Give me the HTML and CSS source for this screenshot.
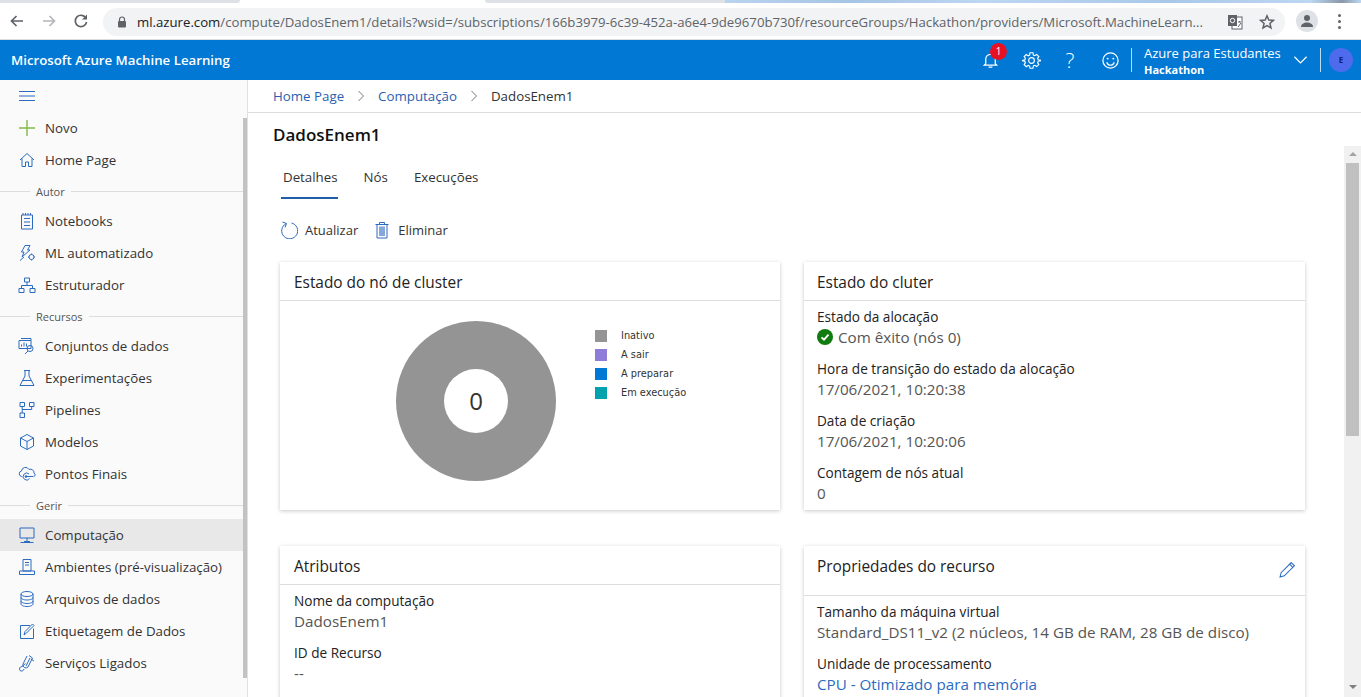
FILE: index.html
```html
<!DOCTYPE html>
<html lang="pt">
<head>
  <meta charset="UTF-8">
  <title>DadosEnem1 - Microsoft Azure Machine Learning</title>
  <link rel="stylesheet" href="styles.css">
</head>
<body>
  <!-- browser chrome -->
  <div class="tabstrip">
    <div class="strip-tab strip-a"></div>
    <div class="strip-tab strip-b"></div>
    <div class="wallpaper"></div>
  </div>
  <div class="toolbar">
    <div class="nav-btns">
      <svg class="nav-icon" viewBox="0 0 16 16"><path d="M14 8H2.500M7.500 3 2.500 8l5 5" fill="none" stroke="#5f6368" stroke-width="1.700"/></svg>
      <svg class="nav-icon" viewBox="0 0 16 16"><path d="M2 8h11.500M8.500 3l5 5-5 5" fill="none" stroke="#b4b6b9" stroke-width="1.700"/></svg>
      <svg class="nav-icon" viewBox="0 0 16 16"><path d="M13 5.200A5.700 5.700 0 1 0 13.600 9" fill="none" stroke="#5f6368" stroke-width="1.700"/><path d="M14 1.500V6.500H9z" fill="#5f6368"/></svg>
    </div>
    <div class="omnibox">
      <svg class="lock" viewBox="0 0 10 12"><path d="M2.500 5V3.500a2.500 2.500 0 0 1 5 0V5" fill="none" stroke="#5f6368" stroke-width="1.200"/><rect x="1" y="5" width="8" height="6.500" rx="1" fill="#5f6368"/></svg>
      <span class="url"><b>ml.azure.com</b>/compute/DadosEnem1/details?wsid=/subscriptions/166b3979-6c39-452a-a6e4-9de9670b730f/resourceGroups/Hackathon/providers/Microsoft.MachineLearn...</span>
      <svg class="translate" viewBox="0 0 16 16"><rect x="5" y="3" width="10" height="12" fill="#fff" stroke="#5f6368"/><rect x="1" y="1" width="9" height="11" fill="#5f6368"/><circle cx="5.500" cy="6.500" r="2.200" fill="none" stroke="#fff"/><path d="M11 8h3M12.500 7v1M11 13l3-4" stroke="#5f6368" fill="none"/></svg>
      <svg class="star" viewBox="0 0 16 16"><path d="M8 1.800 9.800 6l4.600.4-3.500 3 1.100 4.500L8 11.500l-4 2.400 1.100-4.500-3.500-3L6.200 6z" fill="none" stroke="#5f6368" stroke-width="1.500"/></svg>
    </div>
    <div class="avatar-chip"><svg viewBox="0 0 16 16"><circle cx="8" cy="5" r="3" fill="#5f6368"/><path d="M2 14c0-3 3-4.500 6-4.500s6 1.500 6 4.500z" fill="#5f6368"/></svg></div>
    <div class="kebab"><i></i><i></i><i></i></div>
  </div>

  <!-- app header -->
  <header class="appbar">
    <div class="brand">Microsoft Azure Machine Learning</div>
    <div class="appbar-right">
      <div class="bell">
        <svg class="bar-icon" viewBox="0 0 20 20"><path d="M5 14.500V9.500a5 5 0 0 1 10 0v5l1.500 1.500h-13zM8 18h4" fill="none" stroke="#fff" stroke-width="1.300"/></svg>
        <span class="badge">1</span>
      </div>
      <svg class="bar-icon" viewBox="0 0 20 20"><circle cx="10" cy="10" r="3" fill="none" stroke="#fff" stroke-width="1.200"/><path d="M8.400 1.800h3.200l.4 2.400 1.500.7 2-1.300 2.200 2.200-1.300 2 .7 1.500 2.300.5v.4l-2.300.5-.7 1.500 1.300 2-2.200 2.200-2-1.300-1.500.7-.4 2.400H8.400L8 15.900l-1.500-.7-2 1.300-2.200-2.200 1.300-2-.7-1.500-2.300-.5v-.4l2.300-.5.7-1.500-1.300-2 2.200-2.200 2 1.300 1.500-.7z" fill="none" stroke="#fff" stroke-width="1.200"/></svg>
      <span class="help">?</span>
      <svg class="bar-icon" viewBox="0 0 20 20"><circle cx="10" cy="10" r="8" fill="none" stroke="#fff" stroke-width="1.300"/><circle cx="7" cy="8" r="1" fill="#fff"/><circle cx="13" cy="8" r="1" fill="#fff"/><path d="M6 12c1 2 2.500 3 4 3s3-1 4-3" fill="none" stroke="#fff" stroke-width="1.300"/></svg>
      <div class="bar-sep"></div>
      <div class="tenant">
        <div class="tenant-name">Azure para Estudantes</div>
        <div class="tenant-ws">Hackathon</div>
      </div>
      <svg class="chevron" viewBox="0 0 16 10"><path d="M1.500 1.500 8 8l6.500-6.500" fill="none" stroke="#fff" stroke-width="1.300"/></svg>
      <div class="bar-sep last"></div>
      <div class="user-dot">E</div>
    </div>
  </header>

  <div class="workspace">
    <!-- left nav -->
    <nav class="sidebar">
      <div class="nav-scroll">
        <div class="hamburger"><svg viewBox="0 0 16 10"><path d="M0 .5h16M0 5h16M0 9.500h16" stroke="#2b6bc0" stroke-width="1"/></svg></div>
        <div class="nav-item"><svg class="ni" viewBox="0 0 18 18"><path d="M9 1v16M1 9h16" stroke="#7fba45" stroke-width="1.400"/></svg>Novo</div>
        <div class="nav-item"><svg class="ni" viewBox="0 0 18 18"><path d="M2 9 9 2.500 16 9M4 7.500V15.500h3.500V11h3v4.500H14V7.500" class="st"/></svg>Home Page</div>

        <div class="nav-section"><span>Autor</span></div>
        <div class="nav-item"><svg class="ni" viewBox="0 0 18 18"><path d="M3.500 3h11v14h-11zM6 6.500h6M6 10h6M6 13.500h6M5 1v2M7.500 1v2M10 1v2M12.500 1v2" class="st"/></svg>Notebooks</div>
        <div class="nav-item"><svg class="ni" viewBox="0 0 18 18"><path d="M7 1.500h5L9.500 6H12L4 13l2-5H3.500zM2 16.500 6 13" class="st"/><circle cx="13.500" cy="13" r="2.500" class="st"/><path d="M13.500 9.500v1M13.500 15.500v1M10 13h1M16 13h1" class="st"/></svg>ML automatizado</div>
        <div class="nav-item"><svg class="ni" viewBox="0 0 18 18"><path d="M6.500 2h5v4h-5zM1 12.500h5v4H1zM12 12.500h5v4h-5zM9 6v3.500M3.500 12.500v-3h11v3" class="st"/></svg>Estruturador</div>

        <div class="nav-section"><span>Recursos</span></div>
        <div class="nav-item"><svg class="ni" viewBox="0 0 18 18"><path d="M3 1.500h10v2M1 3.500h12v8H1zM3.500 9.500v-2M6 9.500v-4M8.500 9.500v-3" class="st"/><circle cx="12" cy="11.500" r="3" class="st"/><path d="M10 14l-3 3" class="st"/></svg>Conjuntos de dados</div>
        <div class="nav-item"><svg class="ni" viewBox="0 0 18 18"><path d="M6 1.500h6M7 1.500V7L2 16.500h14L11 7V1.500M4.500 11.500h9" class="st"/></svg>Experimentações</div>
        <div class="nav-item"><svg class="ni" viewBox="0 0 18 18"><path d="M2 1.500h4.500v4H2zM11.500 1.500H16v4h-4.500zM2 12h4.500v4.500H2zM4.200 5.500V12M4.200 8.500h9.500v-3" class="st"/></svg>Pipelines</div>
        <div class="nav-item"><svg class="ni" viewBox="0 0 18 18"><path d="M9 1.500 15.500 5v8L9 16.500 2.500 13V5zM2.500 5 9 8.500 15.500 5M9 8.500v8" class="st"/></svg>Modelos</div>
        <div class="nav-item"><svg class="ni" viewBox="0 0 18 18"><path d="M4 11.500H3.500a2.800 2.800 0 0 1 0-5.500 4 4 0 0 1 7.500-1.500 3.500 3.500 0 0 1 5 3.500 2.500 2.500 0 0 1 .5 3.500M11 9a3.500 3.500 0 1 0 .5 4.500" class="st"/><circle cx="8" cy="11.500" r="1.300" fill="#2b6bc0"/><path d="M8 11.500h7.500" class="st"/></svg>Pontos Finais</div>

        <div class="nav-section"><span>Gerir</span></div>
        <div class="nav-item active"><svg class="ni" viewBox="0 0 18 18"><path d="M2 2h14v10H2zM9 12v3M2.500 16.500h13M6 15.500h6" class="st"/></svg>Computação</div>
        <div class="nav-item"><svg class="ni" viewBox="0 0 18 18"><path d="M5 1.500h8V13H5zM7 4.500h4M7 7h4M1.500 16.500h15V13h-15z" class="st"/></svg>Ambientes (pré-visualização)</div>
        <div class="nav-item"><svg class="ni" viewBox="0 0 18 18"><ellipse cx="9" cy="4" rx="6" ry="2.500" class="st"/><path d="M3 4v10c0 1.400 2.700 2.500 6 2.500s6-1.100 6-2.500V4M3 7.500C3 8.900 5.700 10 9 10s6-1.100 6-2.500M3 11c0 1.400 2.700 2.500 6 2.500s6-1.100 6-2.500" class="st"/></svg>Arquivos de dados</div>
        <div class="nav-item"><svg class="ni" viewBox="0 0 18 18"><path d="M15.500 6.500v10h-13v-13H12M6 13l1-3.500L14.500 2 16 3.500 8.500 11z" class="st"/></svg>Etiquetagem de Dados</div>
        <div class="nav-item"><svg class="ni" viewBox="0 0 18 18"><path d="M11 1.500 14.500 4 10 13a3 3 0 0 1-5-3l4-8M8 12 12 4M7.500 9.500 4 12.500A2.500 2.500 0 0 0 2 16.500 2.500 2.500 0 0 0 6 15M13 5l3 2" class="st"/></svg>Serviços Ligados</div>
      </div>
      <div class="nav-thumb"></div>
    </nav>

    <main class="main">
      <div class="breadcrumb">
        <a>Home Page</a>
        <svg class="crumb-sep" viewBox="0 0 8 12"><path d="M1.500 1 6.500 6l-5 5" fill="none" stroke="#777" stroke-width="1"/></svg>
        <a>Computação</a>
        <svg class="crumb-sep" viewBox="0 0 8 12"><path d="M1.500 1 6.500 6l-5 5" fill="none" stroke="#777" stroke-width="1"/></svg>
        <span>DadosEnem1</span>
      </div>
      <h1 class="page-title">DadosEnem1</h1>

      <div class="scroll-row">
        <div class="content">
          <div class="tabs">
            <div class="tab selected">Detalhes</div>
            <div class="tab">Nós</div>
            <div class="tab">Execuções</div>
          </div>

          <div class="commands">
            <div class="cmd">
              <svg class="cmd-icon" viewBox="0 0 18 18"><path d="M6 2.200A8 8 0 1 0 11.500 1.500M2.500 .5 6.500 2 5 6" transform="translate(0 .5)" fill="none" stroke="#2b6bc0" stroke-width="1"/></svg>
              Atualizar
            </div>
            <div class="cmd">
              <svg class="cmd-icon" viewBox="0 0 18 18"><path d="M2.500 3.500h13M6.500 3.500V1.500h5v2M4 3.500V17h10V3.500" fill="none" stroke="#2b6bc0" stroke-width="1"/><path d="M6 5.500h6v9.500H6z" fill="#b5c8e6"/><path d="M7 5.500V15M9 5.500V15M11 5.500V15" stroke="#2b6bc0" stroke-width=".7"/></svg>
              Eliminar
            </div>
          </div>

          <div class="cards">
            <section class="card card-top">
              <h2 class="card-title">Estado do nó de cluster</h2>
              <div class="chart-body">
                <div class="donut"><div class="donut-hole">0</div></div>
                <ul class="legend">
                  <li><i class="sw-idle"></i>Inativo</li>
                  <li><i class="sw-leaving"></i>A sair</li>
                  <li><i class="sw-preparing"></i>A preparar</li>
                  <li><i class="sw-running"></i>Em execução</li>
                </ul>
              </div>
            </section>

            <section class="card card-top card-right">
              <h2 class="card-title">Estado do cluter</h2>
              <div class="fields">
                <div class="field">
                  <div class="label">Estado da alocação</div>
                  <div class="value status">
                    <svg class="ok" viewBox="0 0 16 16"><circle cx="8" cy="8" r="8" fill="#107c10"/><path d="M4.500 8.300 7 10.700l4.500-5" fill="none" stroke="#fff" stroke-width="1.800"/></svg>
                    Com êxito (nós 0)
                  </div>
                </div>
                <div class="field">
                  <div class="label">Hora de transição do estado da alocação</div>
                  <div class="value">17/06/2021, 10:20:38</div>
                </div>
                <div class="field">
                  <div class="label">Data de criação</div>
                  <div class="value">17/06/2021, 10:20:06</div>
                </div>
                <div class="field">
                  <div class="label">Contagem de nós atual</div>
                  <div class="value">0</div>
                </div>
              </div>
            </section>

            <section class="card">
              <h2 class="card-title">Atributos</h2>
              <div class="fields">
                <div class="field">
                  <div class="label">Nome da computação</div>
                  <div class="value">DadosEnem1</div>
                </div>
                <div class="field">
                  <div class="label">ID de Recurso</div>
                  <div class="value">--</div>
                </div>
              </div>
            </section>

            <section class="card card-right">
              <div class="card-title tall">
                <h2>Propriedades do recurso</h2>
                <svg class="edit" viewBox="0 0 16 16"><path d="M11.500 1.500 14.500 4.500 5 14l-4 1 1-4zM10 3l3 3" fill="none" stroke="#2b6bc0" stroke-width="1"/></svg>
              </div>
              <div class="fields">
                <div class="field">
                  <div class="label">Tamanho da máquina virtual</div>
                  <div class="value">Standard_DS11_v2 (2 núcleos, 14 GB de RAM, 28 GB de disco)</div>
                </div>
                <div class="field">
                  <div class="label">Unidade de processamento</div>
                  <div class="value link">CPU - Otimizado para memória</div>
                </div>
              </div>
            </section>
          </div>
        </div>

        <div class="scrollbar">
          <div class="arrow-up"></div>
          <div class="sb-thumb"></div>
          <div class="sb-rest"></div>
          <div class="arrow-down"></div>
        </div>
      </div>
    </main>
  </div>
</body>
</html>
```

FILE: styles.css
```css
* {
  box-sizing: border-box;
}

html, body {
  height: 100%;
  margin: 0;
  overflow: hidden;
}

body {
  display: flex;
  flex-direction: column;
  font-family: "Open Sans", "Noto Sans", Arial, sans-serif;
  font-size: 13px;
  color: #333;
  background: #fff;
}

/* browser chrome */
.tabstrip {
  display: flex;
  height: 3px;
  flex: none;
  background: #fff;
}

.strip-tab {
  background: #dee1e6;
}

.strip-a {
  width: 240px;
  border-radius: 0 0 6px 0;
}

.strip-b {
  width: 240px;
  margin-left: 245px;
  border-radius: 0 0 0 6px;
}

.wallpaper {
  flex: 1;
  background: linear-gradient(90deg, #b9d4ef 0, #a6c4e4 20%, #bcd7f2 40%, #a9c8e8 70%, #bcd7f2 92%, #8a97a8 97%, #bcd7f2 100%);
}

.toolbar {
  display: flex;
  align-items: center;
  height: 37px;
  flex: none;
  background: #fff;
  border-bottom: 1px solid #dadce0;
}

.nav-btns {
  display: flex;
  gap: 16px;
  padding-left: 9px;
  width: 103px;
}

.nav-icon {
  width: 16px;
  height: 16px;
}

.omnibox {
  display: flex;
  align-items: center;
  width: 1182px;
  height: 28px;
  margin-top: 1px;
  padding-left: 14px;
  background: #f1f3f4;
  border-radius: 14px;
}

.lock {
  width: 10px;
  height: 12px;
  flex: none;
}

.url {
  margin-left: 10px;
  width: 1078px;
  flex: none;
  white-space: nowrap;
  font-size: 13.200px;
  color: #5f6368;
}

.url b {
  font-weight: 400;
  color: #202124;
}

.translate {
  width: 16px;
  height: 16px;
  margin-left: 12px;
  flex: none;
}

.star {
  width: 16px;
  height: 16px;
  margin-left: 16px;
  flex: none;
}

.avatar-chip {
  width: 22px;
  height: 22px;
  margin-left: 11px;
  padding: 3px;
  border-radius: 50%;
  background: #dee1e6;
}

.avatar-chip svg {
  display: block;
}

.kebab {
  display: flex;
  flex-direction: column;
  gap: 3px;
  margin-left: 20px;
}

.kebab i {
  width: 3px;
  height: 3px;
  border-radius: 50%;
  background: #5f6368;
}

/* app header */
.appbar {
  display: flex;
  align-items: center;
  justify-content: space-between;
  height: 40px;
  flex: none;
  padding: 0 8px 0 11px;
  background: #0078d4;
  color: #fff;
}

.brand {
  font-size: 13.250px;
  font-weight: 600;
}

.appbar-right {
  display: flex;
  align-items: center;
  height: 100%;
}

.bell {
  position: relative;
  height: 20px;
  margin-right: 22px;
}

.bar-icon {
  width: 19px;
  height: 19px;
  display: block;
}

.badge {
  position: absolute;
  top: -7px;
  left: 9px;
  width: 17px;
  height: 17px;
  border-radius: 50%;
  background: #e81123;
  font-size: 10px;
  line-height: 17px;
  text-align: center;
}

.help {
  width: 20px;
  margin: 0 21px 0 19px;
  font-size: 21px;
  font-weight: 300;
  text-align: center;
}

.bar-sep {
  width: 1px;
  height: 24px;
  margin: 0 12px 0 11px;
  background: #bcdcf3;
}

.bar-sep.last {
  margin: 0 8px 0 12px;
}

.tenant {
  width: 144px;
  padding-top: 2px;
  white-space: nowrap;
}

.tenant-name {
  font-size: 13px;
  line-height: 17px;
}

.tenant-ws {
  font-size: 11px;
  font-weight: 700;
  line-height: 15px;
}

.chevron {
  width: 15px;
  height: 10px;
  margin-left: 5px;
}

.user-dot {
  width: 24px;
  height: 24px;
  border-radius: 50%;
  background: #4f6bed;
  color: #10206a;
  font-size: 8px;
  font-weight: 700;
  line-height: 24px;
  text-align: center;
}

/* main layout */
.workspace {
  display: flex;
  flex: 1;
  min-height: 0;
}

.sidebar {
  position: relative;
  width: 248px;
  flex: none;
  overflow: hidden;
  background: #fafafa;
  border-right: 1px solid #e1e1e1;
}

.nav-thumb {
  position: absolute;
  top: 38px;
  right: 0;
  width: 4px;
  height: 560px;
  background: #c2c2c2;
}

.hamburger {
  height: 32px;
  padding: 11px 0 0 19px;
}

.hamburger svg {
  display: block;
  width: 16px;
  height: 10px;
}

.nav-item {
  display: flex;
  align-items: center;
  height: 32px;
  padding-left: 18px;
  font-size: 13.300px;
  color: #333;
  white-space: nowrap;
}

.nav-item.active {
  background: #e8e8e8;
}

.ni {
  width: 18px;
  height: 18px;
  margin-right: 9px;
  flex: none;
}

.st {
  fill: none;
  stroke: #2b6bc0;
  stroke-width: 1;
}

.nav-section {
  display: flex;
  align-items: center;
  height: 29px;
  padding-top: 2px;
  font-size: 11px;
  color: #555;
}

.nav-section::before {
  content: "";
  width: 30px;
  height: 1px;
  background: #ddd;
}

.nav-section::after {
  content: "";
  flex: 1;
  height: 1px;
  background: #ddd;
}

.nav-section span {
  padding: 0 6px;
}

.main {
  display: flex;
  flex: 1;
  min-width: 0;
  flex-direction: column;
}

.breadcrumb {
  display: flex;
  align-items: center;
  height: 33px;
  flex: none;
  padding-left: 25px;
  border-bottom: 1px solid #ddd;
  font-size: 13.300px;
  color: #333;
}

.breadcrumb a {
  color: #2b5fb0;
}

.crumb-sep {
  width: 8px;
  height: 12px;
  margin: 0 13px;
}

.page-title {
  height: 33px;
  flex: none;
  margin: 0;
  padding: 8px 0 0 25px;
  font-size: 17px;
  font-weight: 600;
  line-height: 27px;
  color: #111;
}

.scroll-row {
  display: flex;
  flex: 1;
  min-height: 0;
}

.content {
  flex: 1;
  min-width: 0;
  overflow: hidden;
  padding: 0 39px 0 32px;
}

.tabs {
  display: flex;
  gap: 26px;
  height: 53px;
  padding: 15px 0 0 1px;
}

.tab {
  height: 38px;
  padding-top: 7px;
  font-size: 13.300px;
  color: #333;
}

.tab.selected {
  padding-left: 2px;
  border-bottom: 2px solid #1f5fa8;
}

.commands {
  display: flex;
  gap: 15px;
  height: 63px;
  padding-top: 21px;
}

.cmd {
  display: flex;
  align-items: center;
  height: 20px;
  gap: 7px;
  font-size: 13px;
}

.cmd-icon {
  width: 18px;
  height: 18px;
}

.cards {
  display: grid;
  grid-template-columns: 500px 501px;
  column-gap: 24px;
  row-gap: 36px;
}

.card {
  background: #fff;
  box-shadow: 0 1px 4px rgba(0, 0, 0, 0.22);
}

.card-top {
  height: 248px;
}

.card-title {
  height: 39px;
  margin: 0;
  padding: 10px 14px 0;
  border-bottom: 1px solid #ddd;
  font-size: 15.400px;
  font-weight: 400;
  line-height: 22px;
  color: #222;
}

.card-title.tall {
  display: flex;
  justify-content: space-between;
  height: 50px;
}

.card-title h2 {
  margin: 0;
  font: inherit;
}

.card-right .card-title,
.card-right .fields {
  padding-left: 13px;
}

.edit {
  width: 17px;
  height: 17px;
  margin: 5px -5px 0 0;
}

.chart-body {
  display: flex;
  padding: 20px 0 0 116px;
}

.donut {
  display: flex;
  align-items: center;
  justify-content: center;
  width: 160px;
  height: 160px;
  border-radius: 50%;
  background: #949494;
}

.donut-hole {
  width: 64px;
  height: 64px;
  border-radius: 50%;
  background: #fff;
  font-size: 24px;
  line-height: 64px;
  text-align: center;
  color: #333;
}

.legend {
  margin: 5px 0 0 39px;
  padding: 0;
  list-style: none;
  font-family: "DejaVu Sans", Arial, sans-serif;
  font-size: 9.800px;
  color: #333;
}

.legend li {
  display: flex;
  align-items: center;
  gap: 14px;
  height: 19px;
}

.legend i {
  width: 12px;
  height: 12px;
}

.sw-idle { background: #949494; }
.sw-leaving { background: #8e7cd8; }
.sw-preparing { background: #0078d4; }
.sw-running { background: #00a2ad; }

.fields {
  padding: 5px 14px 0;
}

.field {
  height: 52px;
}

.label {
  font-size: 13.600px;
  line-height: 22px;
  color: #222;
}

.value {
  margin-top: -1px;
  font-size: 15.200px;
  line-height: 20px;
  color: #555;
  white-space: nowrap;
}

.value.link {
  color: #2b6bc0;
}

.status {
  display: flex;
  align-items: center;
  gap: 5px;
}

.ok {
  width: 16px;
  height: 16px;
}

.scrollbar {
  display: flex;
  flex-direction: column;
  align-items: center;
  width: 17px;
  flex: none;
  background: #f1f1f1;
}

.arrow-up {
  width: 0;
  height: 0;
  margin: 6px 0 7px;
  border: 4px solid transparent;
  border-top: 0;
  border-bottom-color: #a3a3a3;
}

.sb-thumb {
  width: 13px;
  height: 273px;
  flex: none;
  background: #c0c0c0;
}

.sb-rest {
  flex: 1;
}

.arrow-down {
  width: 0;
  height: 0;
  margin: 0 0 8px;
  border: 4px solid transparent;
  border-bottom: 0;
  border-top-color: #7f7f7f;
}
```
